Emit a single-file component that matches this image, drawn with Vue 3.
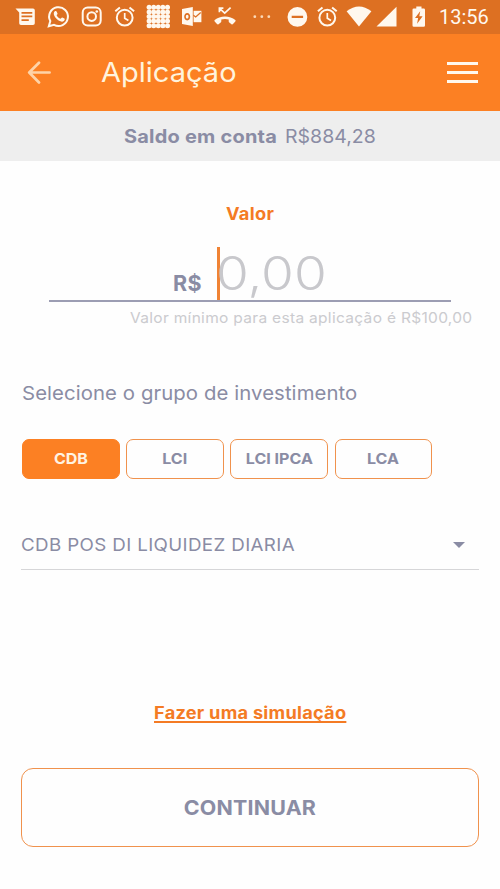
<script setup>
import { ref } from 'vue'

const groups = ['CDB', 'LCI', 'LCI IPCA', 'LCA']
const selected = ref('CDB')
const dots = [2.3, 6.9, 11.5, 16.1, 20.7]
</script>

<template>
  <div class="screen">
    <div class="status">
      <svg class="status-icons" width="500" height="34" viewBox="0 0 500 34" fill="#fff8ee">
        <path fill-rule="evenodd" d="M15.5 8.5H33a1.8 1.8 0 0 1 1.8 1.8v13a1.8 1.8 0 0 1-1.8 1.8H21a1.8 1.8 0 0 1-1.8-1.8V12.5zM21.5 12v1.7h10.8V12zm0 3.6v1.7h10.8v-1.7zm0 3.7V21h7.3v-1.7z" />
        <g fill="none" stroke="#fff8ee" stroke-width="2">
          <path d="M48.8 26.2l1.5-5.1a9.4 9.4 0 1 1 3.7 3.7z" />
          <rect x="82.7" y="7.6" width="18" height="18" rx="5" />
          <circle cx="91.7" cy="16.6" r="4.3" />
        </g>
        <path d="M54.8 11.3c.6-.6 1.5-.5 1.8.1l.9 2.1c.2.5-.7 1.3-.9 1.7.9 1.8 2.2 2.9 4 3.6.5-.4 1.1-1.6 1.7-1.3l2.1 1c.8.4.1 2.1-.6 2.6-3.4 2.4-10.6-3.8-10-8 .1-.8.6-1.4 1-1.8z" />
        <circle cx="96.8" cy="11.5" r="1.3" />
        <g v-for="x in [124.7, 327.3]" :key="x" fill="none" stroke="#fff8ee" stroke-width="2">
          <circle :cx="x" cy="17.7" r="7.9" />
          <path :d="`M${x - 9.4} 11.2l4.6-3.8M${x + 9.4} 11.2l-4.6-3.8`" />
          <path :d="`M${x} 13v5.2l3.7 2.3`" stroke-width="1.7" />
        </g>
        <g transform="translate(146.8 5)">
          <template v-for="y in dots" :key="y">
            <circle v-for="x in dots" :key="x" :cx="x" :cy="y" r="2.5" />
          </template>
        </g>
        <path fill-rule="evenodd" d="M182 8.9l10.8-1.9v19l-10.8-1.9zM187.2 13c-4 0-4 7.4 0 7.4s4-7.4 0-7.4zm0 1.8c1.8 0 1.8 3.8 0 3.8s-1.8-3.8 0-3.8z" />
        <path d="M193.6 10.8h7.8v11.4h-7.8z" />
        <path d="M193.4 15.2l2.3 1.8 5-4.4" fill="none" stroke="#dd7022" stroke-width="1.3" />
        <path d="M225 16.4c-4.1 0-7.5 1.3-10.3 3.6-.5.5-.5 1 0 1.5l2.3 2.6c.5.5 1 .5 1.5.1l2.2-1.6c.5-.3.6-.7.6-1.3v-1.8c2.4-.8 5-.8 7.4 0v1.8c0 .6.1 1 .6 1.3l2.2 1.6c.5.4 1 .4 1.5-.1l2.3-2.6c.5-.5.5-1 0-1.5-2.8-2.3-6.2-3.6-10.3-3.6z" />
        <path d="M219.4 12.2V8.2h4M219.8 8.6l4.9 4.6 5.9-5.5" fill="none" stroke="#fff8ee" stroke-width="1.7" />
        <g fill="#fbd9b8"><circle cx="254.8" cy="16.7" r="1.4" /><circle cx="261.8" cy="16.7" r="1.4" /><circle cx="268.8" cy="16.7" r="1.4" /></g>
        <path fill-rule="evenodd" d="M297.4 7a9.9 9.9 0 1 0 0 19.8 9.9 9.9 0 0 0 0-19.8zm-5.7 8.7h11.4v2.4h-11.4z" />
        <path d="M346.6 11.2Q359 1.8 371.4 11.2L359 26.4z" />
        <path d="M396.5 6.8v19.6h-20z" />
        <path fill-rule="evenodd" d="M416.3 6.5h5.2v2h2.2a1.3 1.3 0 0 1 1.3 1.3v15.6a1.3 1.3 0 0 1-1.3 1.3h-9.9a1.3 1.3 0 0 1-1.3-1.3V9.8a1.3 1.3 0 0 1 1.3-1.3h2.5zm3.9 4.7l-5.2 6.9h3.1l-1 5.6 5.5-7.5h-3.3z" />
      </svg>
      <span class="clock">13:56</span>
    </div>

    <header class="appbar">
      <svg class="back" width="24" height="24" viewBox="0 0 24 24" fill="none" stroke="#fed3a8" stroke-width="2.7" stroke-linecap="round" stroke-linejoin="round">
        <path d="M12 1.8L2.2 11.5 12 21.5M2.6 11.5h20" />
      </svg>
      <h1 class="title">Aplicação</h1>
      <div class="menu"><i></i><i></i><i></i></div>
    </header>

    <div class="balance">
      <b class="balance-label">Saldo em conta</b>
      <span class="balance-value">R$884,28</span>
    </div>

    <main class="content">
      <div class="label"><span class="wide">Valor</span></div>
      <div class="amount">
        <span class="currency">R$</span>
        <i class="caret"></i>
        <span class="placeholder">0,00</span>
      </div>
      <div class="hint"><span class="wide">Valor mínimo para esta aplicação é R$100,00</span></div>

      <div class="prompt"><span class="wide">Selecione o grupo de investimento</span></div>
      <div class="groups">
        <button
          v-for="g in groups"
          :key="g"
          class="group"
          :class="{ active: g === selected }"
          @click="selected = g"
        ><span class="wide">{{ g }}</span></button>
      </div>

      <div class="select">
        <span class="select-text wide">CDB POS DI LIQUIDEZ DIARIA</span>
        <i class="arrow"></i>
      </div>

      <div class="link"><a class="wide">Fazer uma simulação</a></div>
      <button class="continue"><span class="wide">CONTINUAR</span></button>
    </main>
  </div>
</template>

<style>
body {
  margin: 0;
  background: #fefefe;
}
</style>

<style scoped>
.screen {
  width: 500px;
  height: 889px;
  overflow: hidden;
  background: #fefefe;
  color: #8a8ca4;
  font-family: Inter, "Liberation Sans", sans-serif;
  display: flex;
  flex-direction: column;
  white-space: nowrap;
}
.wide {
  display: inline-block;
  transform: scaleX(1.07);
  transform-origin: left;
}
.status {
  height: 34px;
  background: #dd7022;
  display: flex;
  align-items: center;
}
.status-icons {
  flex: none;
}
.clock {
  margin-left: -61px;
  color: #fff8ee;
  font: 400 20px/34px Roboto, sans-serif;
}
.appbar {
  height: 77px;
  background: #fc8023;
  display: flex;
  align-items: center;
  padding: 0 22px 0 27px;
}
.title {
  margin: 0 0 0 50px;
  flex: 1;
  font-size: 27.5px;
  line-height: 77px;
  font-weight: 400;
  letter-spacing: 0;
  transform: scaleX(1.055);
  transform-origin: left;
  color: #fff3dd;
}
.menu {
  display: flex;
  flex-direction: column;
  gap: 6px;
}
.menu i {
  width: 31px;
  height: 3px;
  background: #fff8ee;
}
.balance {
  height: 50px;
  background: #eee;
  display: flex;
  align-items: center;
  padding: 0 0 0 124px;
  box-sizing: border-box;
  gap: 8px;
  font-size: 18.5px;
}
.balance-label {
  width: 153px;
  font-weight: 700;
  letter-spacing: 0.2px;
  transform: scaleX(1.08);
  transform-origin: left;
}
.balance-value {
  transform: scaleX(1.055);
  transform-origin: left;
}
.content {
  display: flex;
  flex-direction: column;
  flex: 1;
}
.label {
  height: 30px;
  margin-top: 38px;
  padding-left: 226px;
  line-height: 30px;
  font-size: 17px;
  font-weight: 700;
  letter-spacing: 0.3px;
  color: #f47b24;
}
.amount {
  height: 53px;
  margin: 18px 49px 0 49px;
  border-bottom: 2px solid #9c9db3;
  padding-left: 124px;
  display: flex;
  align-items: center;
}
.currency {
  width: 44px;
  padding-top: 18px;
  font-size: 21.5px;
  font-weight: 700;
  letter-spacing: 0.5px;
}
.caret {
  width: 3px;
  height: 53px;
  background: #f08335;
}
.placeholder {
  margin-left: -4px;
  transform: scaleX(1.155);
  transform-origin: left;
  font-size: 46px;
  line-height: 53px;
  font-weight: 300;
  color: #c8c8cc;
}
.hint {
  height: 20px;
  margin-top: 6px;
  padding-left: 130px;
  font-size: 14.5px;
  line-height: 20px;
  color: #cbcbcf;
  letter-spacing: 0.28px;
}
.prompt {
  height: 30px;
  margin-top: 51px;
  padding-left: 22px;
  font-size: 19px;
  line-height: 30px;
  letter-spacing: 0.08px;
}
.groups {
  display: flex;
  gap: 6.4px;
  margin: 29.5px 0 0 22px;
}
.group {
  width: 97.8px;
  height: 40.5px;
  box-sizing: border-box;
  padding: 0;
  border: 1.5px solid #f0924d;
  border-radius: 7px;
  background: transparent;
  color: #8a8ca4;
  font: 700 15px/1 Inter, "Liberation Sans", sans-serif;
}
.group .wide,
.continue .wide {
  transform-origin: center;
}
.group.active {
  background: #fc8023;
  border-color: #fc8023;
  color: #fff3e2;
}
.select {
  height: 49px;
  margin: 41px 21px 0;
  border-bottom: 1.5px solid #d6d6d8;
  display: flex;
  justify-content: space-between;
  align-items: center;
  padding-right: 14px;
}
.select-text {
  font-size: 17.5px;
  line-height: 49px;
  letter-spacing: 0.35px;
}
.arrow {
  border: 6.5px solid transparent;
  border-top-color: #8a8ca4;
  border-bottom: 0;
}
.link {
  height: 30px;
  margin-top: 128px;
  padding-left: 154px;
  font-size: 17px;
  line-height: 30px;
  font-weight: 700;
  letter-spacing: 0.24px;
  color: #f47b24;
}
.link a {
  line-height: 30px;
  text-decoration: underline;
  text-decoration-thickness: 1.5px;
  text-underline-offset: 2px;
  text-decoration-skip-ink: none;
}
.continue {
  height: 79px;
  margin: 40px 21px 0;
  padding: 0;
  box-sizing: border-box;
  border: 1.5px solid #f0924d;
  border-radius: 12px;
  background: transparent;
  color: #8a8ca4;
  font: 700 20px/1 Inter, "Liberation Sans", sans-serif;
  letter-spacing: 0.2px;
}
</style>
